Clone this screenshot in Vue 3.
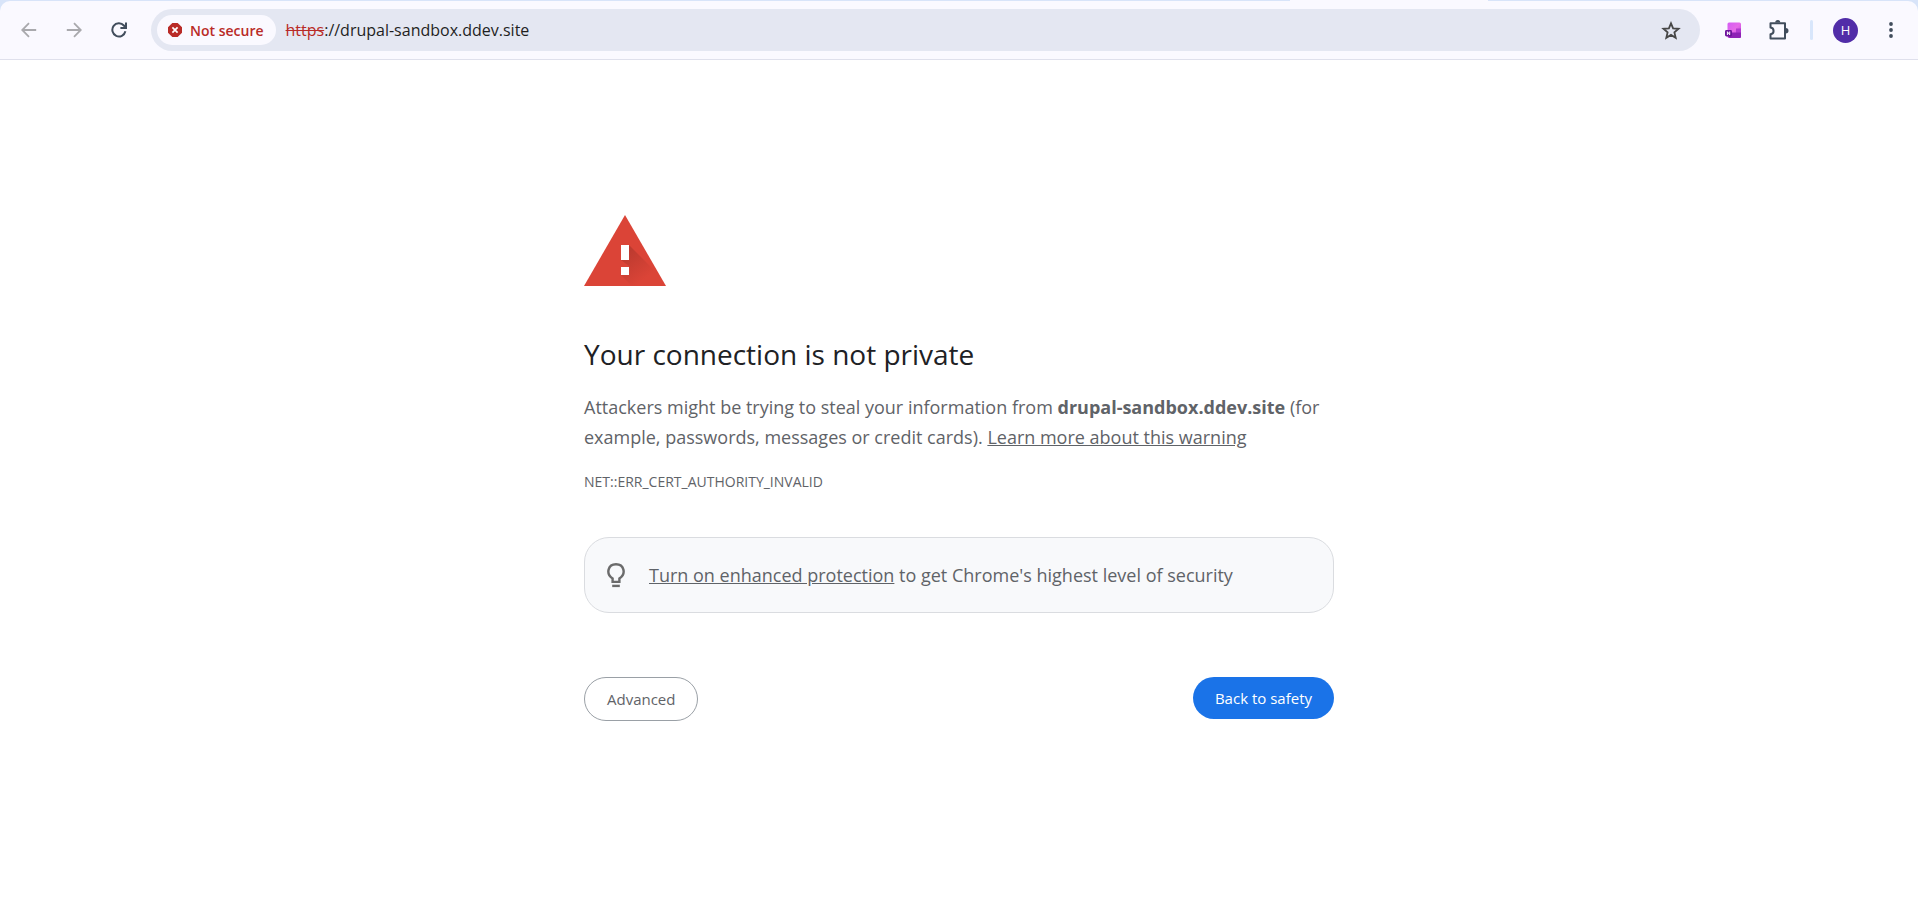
<script setup>
import {ref} from "vue";

const address = ref('://drupal-sandbox.ddev.site')
const host = 'drupal-sandbox.ddev.site'
</script>

<template>
  <div class="window">
    <div class="tab-edge"><span class="active-tab"></span></div>
    <header class="toolbar">
      <button class="icon-button" aria-label="Back" disabled>
        <svg width="16" height="16" viewBox="0 0 16 16" fill="none" stroke="#a9a9ad" stroke-width="1.8">
          <path d="M15.2 8H1.6M8 1.2L1.2 8L8 14.8"/>
        </svg>
      </button>
      <button class="icon-button" aria-label="Forward" disabled>
        <svg width="16" height="16" viewBox="0 0 16 16" fill="none" stroke="#a9a9ad" stroke-width="1.8">
          <path d="M.8 8H14.4M8 1.2L14.8 8L8 14.8"/>
        </svg>
      </button>
      <button class="icon-button" aria-label="Reload">
        <svg width="16" height="16" viewBox="0 0 16 16" fill="none" stroke="#414d5c" stroke-width="2">
          <path d="M14.4 9.3A6.6 6.6 0 1 1 12.9 3.5L14.6 5.6"/>
          <path d="M15 .5V6H9.4"/>
        </svg>
      </button>
      <div class="omnibox">
        <button class="chip">
          <svg width="14" height="14" viewBox="0 0 14 14">
            <path d="M4.3 0H9.7L14 4.3V9.7L9.7 14H4.3L0 9.7V4.3Z" fill="#b92b27"/>
            <path d="M4.4 4.4L9.6 9.6M9.6 4.4L4.4 9.6" stroke="#fff" stroke-width="1.7"/>
          </svg>
          Not secure
        </button>
        <label class="scheme" for="address">https</label>
        <input id="address" v-model="address" type="text" spellcheck="false">
        <button class="star" aria-label="Bookmark this tab">
          <svg width="20" height="19" viewBox="0 0 20 19" fill="none" stroke="#474747" stroke-width="1.8">
            <path d="M10 2.3L12.1 7.3L17.6 7.8L13.4 11.4L14.7 16.8L10 13.9L5.3 16.8L6.6 11.4L2.4 7.8L7.9 7.3Z"/>
          </svg>
        </button>
      </div>
      <div class="tools">
        <button class="icon-button" aria-label="OneNote Web Clipper">
          <svg width="16" height="16" viewBox="0 0 16 16">
            <defs>
              <linearGradient id="note" x1="0" y1="0" x2="1" y2="1">
                <stop offset="0" stop-color="#d45cf5"/>
                <stop offset=".5" stop-color="#e66be8"/>
                <stop offset="1" stop-color="#b137d8"/>
              </linearGradient>
            </defs>
            <rect x="2.5" y=".5" width="13.5" height="15.5" rx="1.5" fill="url(#note)"/>
            <path d="M11 6.5H16V11H11Z" fill="#b23bd0"/>
            <path d="M3 10.5H16V14.5Q16 16 14.5 16H5Q3 16 3 14Z" fill="#8e22b5"/>
            <rect x="0" y="8" width="7" height="6.5" rx="1.4" fill="#6c139b"/>
            <path d="M2.4 13V9.7L4.7 12.8V9.5" fill="none" stroke="#fff" stroke-width="1"/>
          </svg>
        </button>
        <button class="icon-button" aria-label="Extensions">
          <svg width="22" height="22" viewBox="0 0 22 22">
            <path d="M2.5 4.2H17V19.5H2.5V15.2C6.6 14.6 6.6 9.2 2.5 8.6Z" fill="none" stroke="#414d5c" stroke-width="2" stroke-linejoin="round"/>
            <path d="M7.2 3.6A2.6 2.6 0 0 1 12.4 3.6ZM17.8 9A2.7 2.7 0 0 1 17.8 14.4Z" fill="#414d5c"/>
          </svg>
        </button>
        <span class="divider"></span>
        <button class="avatar" aria-label="Profile">H</button>
        <button class="icon-button" aria-label="Menu">
          <svg width="4" height="16" viewBox="0 0 4 16" fill="#414d5c">
            <circle cx="2" cy="2" r="1.9"/>
            <circle cx="2" cy="8" r="1.9"/>
            <circle cx="2" cy="14" r="1.9"/>
          </svg>
        </button>
      </div>
    </header>

    <main class="interstitial">
      <svg width="82" height="71" viewBox="0 0 82 71">
        <defs>
          <linearGradient id="shade" x1="44" y1="30" x2="66" y2="60" gradientUnits="userSpaceOnUse">
            <stop offset="0" stop-color="#b8392e"/>
            <stop offset="1" stop-color="#db4437"/>
          </linearGradient>
        </defs>
        <path d="M41 0L82 71H0Z" fill="#db4437"/>
        <path d="M45 30L69 54L79 71H48L37 60V53H45V51L37 45Z" fill="url(#shade)"/>
        <path d="M37 30H45V45H37ZM37 52H45V60H37Z" fill="#fff"/>
      </svg>
      <h1>Your connection is not private</h1>
      <p class="message">
        Attackers might be trying to steal your information from <strong>{{ host }}</strong> (for
        example, passwords, messages or credit cards). <a href="#">Learn more about this warning</a>
      </p>
      <p class="error-code">NET::ERR_CERT_AUTHORITY_INVALID</p>
      <div class="promo">
        <svg width="18" height="25" viewBox="0 0 18 25" fill="none" stroke="#6b6b6b" stroke-width="2.4">
          <path d="M5.6 18.9V15.4C-1.6 10.8 1 1.3 9 1.3S19.6 10.8 12.4 15.4V18.9Z"/>
          <path d="M5.2 22.9H12.8"/>
        </svg>
        <p><a href="#">Turn on enhanced protection</a> to get Chrome's highest level of security</p>
      </div>
      <div class="actions">
        <button class="advanced">Advanced</button>
        <button class="safety">Back to safety</button>
      </div>
    </main>
  </div>
</template>

<style>
  body {
    margin: 0;
    background-color: #fff;
  }
</style>

<style scoped>
  * {
    box-sizing: border-box;
  }
  .window {
    font-family: "Segoe UI", "Open Sans", sans-serif;
    color: #5f6368;
    background: linear-gradient(#d8e4f9, #d8e4f9) top / 100% 12px no-repeat;
  }
  button {
    font-family: inherit;
    border: none;
    padding: 0;
    background: none;
    cursor: pointer;
  }
  svg {
    display: block;
    flex-shrink: 0;
  }
  .tab-edge {
    height: 1px;
    display: flex;
    justify-content: flex-end;
    padding-right: 430px;
  }
  .active-tab {
    width: 198px;
    background-color: #faf9ff;
  }
  .toolbar {
    height: 59px;
    display: flex;
    align-items: center;
    padding: 0 12px 0 14px;
    background-color: #faf9ff;
    border-bottom: 1px solid #dfe0ec;
    border-radius: 10px 10px 0 0;
  }
  .icon-button {
    width: 30px;
    height: 30px;
    display: flex;
    align-items: center;
    justify-content: center;
    margin-right: 15px;
  }
  .omnibox {
    flex: 1;
    height: 42px;
    display: flex;
    align-items: center;
    margin-left: 2px;
    padding: 0 19px 0 6px;
    border-radius: 21px;
    background-color: #e4e7f2;
  }
  .chip {
    height: 30px;
    display: flex;
    align-items: center;
    gap: 8px;
    padding: 0 12px 0 11px;
    border-radius: 15px;
    background-color: #faf9ff;
    color: #b92b27;
    font-size: 14px;
    font-weight: 600;
    white-space: nowrap;
  }
  .scheme {
    margin-left: 10px;
    color: #b92b27;
    font-size: 16px;
    text-decoration: line-through;
  }
  input {
    flex: 1;
    min-width: 0;
    border: none;
    padding: 0;
    background: none;
    color: #1f1f1f;
    font-family: inherit;
    font-size: 16px;
  }
  input:focus {
    outline: none;
  }
  .tools {
    display: flex;
    align-items: center;
    padding-left: 18px;
  }
  .tools .icon-button {
    margin-right: 16px;
  }
  .divider {
    width: 3px;
    height: 20px;
    border-radius: 2px;
    background-color: #d8e6fb;
  }
  .avatar {
    width: 25px;
    height: 25px;
    margin: 0 18px 0 20px;
    border-radius: 50%;
    background-color: #512da8;
    color: #fff;
    font-size: 13px;
  }
  .tools .icon-button:last-child {
    margin-right: 0;
  }
  .interstitial {
    width: min(750px, 90%);
    margin: 0 auto;
    padding-top: 155px;
  }
  h1 {
    margin: 50px 0 20px;
    color: #202124;
    font-size: 28px;
    font-weight: 400;
    line-height: 36px;
  }
  p {
    margin: 0;
  }
  a {
    color: inherit;
  }
  .message, .promo {
    font-size: 18px;
    line-height: 30px;
  }
  .error-code {
    margin-top: 20px;
    font-size: 14px;
    line-height: 20px;
  }
  .promo {
    display: flex;
    align-items: center;
    gap: 24px;
    margin-top: 45px;
    padding: 22px;
    border: 1px solid #dadce0;
    border-radius: 25px;
    background-color: #f8f9fb;
  }
  .actions {
    display: flex;
    justify-content: space-between;
    align-items: flex-start;
    margin-top: 64px;
  }
  .actions button {
    padding: 0 22px;
    border-radius: 22px;
    font-size: 15px;
  }
  .advanced {
    height: 44px;
    border: 1px solid #9aa0a6;
    color: #5f6368;
  }
  .actions .advanced {
    border: 1px solid #9aa0a6;
  }
  .safety {
    height: 42px;
  }
  .actions .safety {
    background-color: #1a73e8;
    color: #fff;
  }
</style>
